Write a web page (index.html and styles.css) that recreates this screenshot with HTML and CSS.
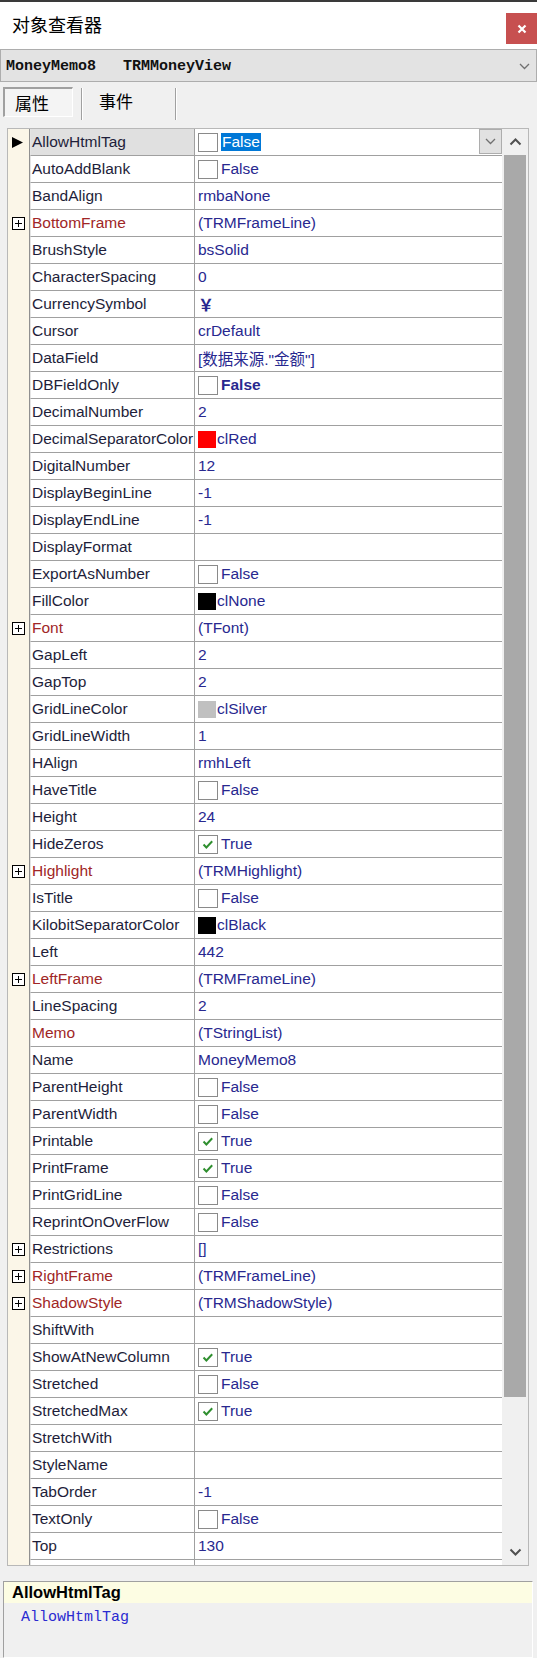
FILE: index.html
```html
<!DOCTYPE html>
<html lang="zh-CN">
<head>
<meta charset="utf-8">
<title>对象查看器</title>
<link rel="stylesheet" href="styles.css">
</head>
<body>
<svg class="defs" width="0" height="0">
  <symbol id="plus" viewBox="0 0 13 13"><rect x="0.5" y="0.5" width="12" height="12" fill="#fff" stroke="#000"/><path d="M3 6.5h7M6.5 3v7" stroke="#000" stroke-width="1"/></symbol>
  <symbol id="tick" viewBox="0 0 19 19"><path d="M4.5 9.5l3.2 3.4 6.5-7" fill="none" stroke="#2f8f2f" stroke-width="2.2"/></symbol>
</svg>
<div class="window">
  <header class="titlebar">
    <span class="title">对象查看器</span>
    <span class="close"><svg width="10" height="10" viewBox="0 0 10 10"><path d="M1.5 1.5l7 7M8.5 1.5l-7 7" stroke="#fff" stroke-width="2.2"/></svg></span>
  </header>
  <div class="combo">
    <span class="combo-text">MoneyMemo8   TRMMoneyView</span>
    <svg class="combo-chev" width="11" height="7" viewBox="0 0 11 7"><path d="M1 1l4.5 4.5L10 1" fill="none" stroke="#707070" stroke-width="1.3"/></svg>
  </div>
  <nav class="tabs">
    <span class="tab active">属性</span>
    <span class="sep"></span>
    <span class="tab">事件</span>
    <span class="sep"></span>
  </nav>
  <section class="inspector">
    <div class="rows">
      <div class="row selected"><div class="gut"><svg width="11" height="11" viewBox="0 0 11 11"><path d="M0 0L11 5.5L0 11Z" fill="#000"/></svg></div><div class="name">AllowHtmlTag</div><div class="val"><span class="cb"></span><span class="hl">False</span><span class="dd"><svg width="11" height="7" viewBox="0 0 11 7"><path d="M1 1l4.5 4.5L10 1" fill="none" stroke="#707070" stroke-width="1.3"/></svg></span></div></div>
      <div class="row"><div class="gut"></div><div class="name">AutoAddBlank</div><div class="val"><span class="cb"></span>False</div></div>
      <div class="row"><div class="gut"></div><div class="name">BandAlign</div><div class="val">rmbaNone</div></div>
      <div class="row"><div class="gut"><svg class="plus"><use href="#plus"/></svg></div><div class="name obj">BottomFrame</div><div class="val">(TRMFrameLine)</div></div>
      <div class="row"><div class="gut"></div><div class="name">BrushStyle</div><div class="val">bsSolid</div></div>
      <div class="row"><div class="gut"></div><div class="name">CharacterSpacing</div><div class="val">0</div></div>
      <div class="row"><div class="gut"></div><div class="name">CurrencySymbol</div><div class="val"><span class="yen">￥</span></div></div>
      <div class="row"><div class="gut"></div><div class="name">Cursor</div><div class="val">crDefault</div></div>
      <div class="row"><div class="gut"></div><div class="name">DataField</div><div class="val cjk">[数据来源."金额"]</div></div>
      <div class="row"><div class="gut"></div><div class="name">DBFieldOnly</div><div class="val"><span class="cb"></span><b class="bold">False</b></div></div>
      <div class="row"><div class="gut"></div><div class="name">DecimalNumber</div><div class="val">2</div></div>
      <div class="row"><div class="gut"></div><div class="name">DecimalSeparatorColor</div><div class="val"><span class="sw red"></span>clRed</div></div>
      <div class="row"><div class="gut"></div><div class="name">DigitalNumber</div><div class="val">12</div></div>
      <div class="row"><div class="gut"></div><div class="name">DisplayBeginLine</div><div class="val">-1</div></div>
      <div class="row"><div class="gut"></div><div class="name">DisplayEndLine</div><div class="val">-1</div></div>
      <div class="row"><div class="gut"></div><div class="name">DisplayFormat</div><div class="val"></div></div>
      <div class="row"><div class="gut"></div><div class="name">ExportAsNumber</div><div class="val"><span class="cb"></span>False</div></div>
      <div class="row"><div class="gut"></div><div class="name">FillColor</div><div class="val"><span class="sw black"></span>clNone</div></div>
      <div class="row"><div class="gut"><svg class="plus"><use href="#plus"/></svg></div><div class="name obj">Font</div><div class="val">(TFont)</div></div>
      <div class="row"><div class="gut"></div><div class="name">GapLeft</div><div class="val">2</div></div>
      <div class="row"><div class="gut"></div><div class="name">GapTop</div><div class="val">2</div></div>
      <div class="row"><div class="gut"></div><div class="name">GridLineColor</div><div class="val"><span class="sw silver"></span>clSilver</div></div>
      <div class="row"><div class="gut"></div><div class="name">GridLineWidth</div><div class="val">1</div></div>
      <div class="row"><div class="gut"></div><div class="name">HAlign</div><div class="val">rmhLeft</div></div>
      <div class="row"><div class="gut"></div><div class="name">HaveTitle</div><div class="val"><span class="cb"></span>False</div></div>
      <div class="row"><div class="gut"></div><div class="name">Height</div><div class="val">24</div></div>
      <div class="row"><div class="gut"></div><div class="name">HideZeros</div><div class="val"><span class="cb"><svg><use href="#tick"/></svg></span>True</div></div>
      <div class="row"><div class="gut"><svg class="plus"><use href="#plus"/></svg></div><div class="name obj">Highlight</div><div class="val">(TRMHighlight)</div></div>
      <div class="row"><div class="gut"></div><div class="name">IsTitle</div><div class="val"><span class="cb"></span>False</div></div>
      <div class="row"><div class="gut"></div><div class="name">KilobitSeparatorColor</div><div class="val"><span class="sw black"></span>clBlack</div></div>
      <div class="row"><div class="gut"></div><div class="name">Left</div><div class="val">442</div></div>
      <div class="row"><div class="gut"><svg class="plus"><use href="#plus"/></svg></div><div class="name obj">LeftFrame</div><div class="val">(TRMFrameLine)</div></div>
      <div class="row"><div class="gut"></div><div class="name">LineSpacing</div><div class="val">2</div></div>
      <div class="row"><div class="gut"></div><div class="name obj">Memo</div><div class="val">(TStringList)</div></div>
      <div class="row"><div class="gut"></div><div class="name">Name</div><div class="val">MoneyMemo8</div></div>
      <div class="row"><div class="gut"></div><div class="name">ParentHeight</div><div class="val"><span class="cb"></span>False</div></div>
      <div class="row"><div class="gut"></div><div class="name">ParentWidth</div><div class="val"><span class="cb"></span>False</div></div>
      <div class="row"><div class="gut"></div><div class="name">Printable</div><div class="val"><span class="cb"><svg><use href="#tick"/></svg></span>True</div></div>
      <div class="row"><div class="gut"></div><div class="name">PrintFrame</div><div class="val"><span class="cb"><svg><use href="#tick"/></svg></span>True</div></div>
      <div class="row"><div class="gut"></div><div class="name">PrintGridLine</div><div class="val"><span class="cb"></span>False</div></div>
      <div class="row"><div class="gut"></div><div class="name">ReprintOnOverFlow</div><div class="val"><span class="cb"></span>False</div></div>
      <div class="row"><div class="gut"><svg class="plus"><use href="#plus"/></svg></div><div class="name">Restrictions</div><div class="val">[]</div></div>
      <div class="row"><div class="gut"><svg class="plus"><use href="#plus"/></svg></div><div class="name obj">RightFrame</div><div class="val">(TRMFrameLine)</div></div>
      <div class="row"><div class="gut"><svg class="plus"><use href="#plus"/></svg></div><div class="name obj">ShadowStyle</div><div class="val">(TRMShadowStyle)</div></div>
      <div class="row"><div class="gut"></div><div class="name">ShiftWith</div><div class="val"></div></div>
      <div class="row"><div class="gut"></div><div class="name">ShowAtNewColumn</div><div class="val"><span class="cb"><svg><use href="#tick"/></svg></span>True</div></div>
      <div class="row"><div class="gut"></div><div class="name">Stretched</div><div class="val"><span class="cb"></span>False</div></div>
      <div class="row"><div class="gut"></div><div class="name">StretchedMax</div><div class="val"><span class="cb"><svg><use href="#tick"/></svg></span>True</div></div>
      <div class="row"><div class="gut"></div><div class="name">StretchWith</div><div class="val"></div></div>
      <div class="row"><div class="gut"></div><div class="name">StyleName</div><div class="val"></div></div>
      <div class="row"><div class="gut"></div><div class="name">TabOrder</div><div class="val">-1</div></div>
      <div class="row"><div class="gut"></div><div class="name">TextOnly</div><div class="val"><span class="cb"></span>False</div></div>
      <div class="row"><div class="gut"></div><div class="name">Top</div><div class="val">130</div></div>
      <div class="row"><div class="gut"></div><div class="name"></div><div class="val"></div></div>
    </div>
    <div class="scrollbar">
      <span class="arrow"><svg width="13" height="8" viewBox="0 0 13 8"><path d="M1.5 6.5L6.5 1.5L11.5 6.5" fill="none" stroke="#505050" stroke-width="2"/></svg></span>
      <span class="thumb"></span>
      <span class="track"></span>
      <span class="arrow"><svg width="13" height="8" viewBox="0 0 13 8"><path d="M1.5 1.5L6.5 6.5L11.5 1.5" fill="none" stroke="#505050" stroke-width="2"/></svg></span>
    </div>
  </section>
  <section class="desc">
    <div class="desc-head">AllowHtmlTag</div>
    <div class="desc-body">AllowHtmlTag</div>
  </section>
</div>
</body>
</html>
```

FILE: styles.css
```css
* { box-sizing: border-box; }
html, body { margin: 0; padding: 0; }
body {
  width: 537px;
  height: 1658px;
  background: #f0f0f0;
  font-family: "Liberation Sans", Arial, "Noto Sans CJK SC", sans-serif;
  font-size: 15.5px;
  overflow: hidden;
}
.defs { position: absolute; width: 0; height: 0; }
.window {
  border-top: 2px solid #3a3a3a;
  display: flex;
  flex-direction: column;
}
.titlebar {
  height: 47px;
  background: #fff;
  display: flex;
  justify-content: space-between;
  align-items: flex-start;
}
.title {
  font-family: "Noto Sans CJK SC", sans-serif;
  font-size: 18px;
  line-height: 24px;
  margin: 10px 0 0 12px;
  color: #000;
}
.close {
  width: 31px;
  height: 31px;
  margin-top: 11px;
  background: #c75050;
  display: flex;
  align-items: center;
  justify-content: center;
}
.combo {
  height: 33px;
  background: #e3e3e3;
  border: 1px solid #adadad;
  display: flex;
  align-items: center;
  justify-content: space-between;
  padding: 2px 6px 0 5px;
}
.combo-text {
  font-family: "Liberation Mono", "Courier New", monospace;
  font-size: 15px;
  font-weight: bold;
  white-space: pre;
  color: #111;
}
.tabs {
  height: 46px;
  display: flex;
  align-items: flex-start;
  padding: 5px 0 0 3px;
}
.tab {
  font-family: "Noto Sans CJK SC", sans-serif;
  font-size: 17px;
  line-height: 28px;
  color: #000;
  height: 30px;
}
.tab.active {
  width: 70px;
  padding-left: 10px;
  border-top: 2px solid #a0a0a0;
  border-left: 2px solid #a0a0a0;
  border-right: 1px solid #fff;
  border-bottom: 1px solid #fff;
  background: #f4f4f4;
}
.tab + .sep { margin-left: 8px; }
.sep {
  width: 2px;
  height: 32px;
  margin-top: 1px;
  border-left: 1px solid #a0a0a0;
  border-right: 1px solid #fff;
}
.sep + .tab { margin-left: 16px; margin-right: 34px; }
.inspector {
  margin-left: 7px;
  width: 522px;
  height: 1438px;
  border: 1px solid #b8b8b8;
  display: flex;
  background: #fff;
}
.rows {
  width: 494px;
  height: 1436px;
  overflow: hidden;
  display: flex;
  flex-direction: column;
}
.row {
  display: grid;
  grid-template-columns: 22px 165px 307px;
  height: 27px;
  flex: 0 0 27px;
}
.gut {
  background: #fbf6e8;
  border-right: 1px solid #909090;
  display: flex;
  align-items: center;
  padding-left: 4px;
}
.plus { width: 13px; height: 13px; }
.name {
  border-right: 1px solid #a0a0a0;
  border-bottom: 1px solid #a0a0a0;
  border-left: 1px solid #e4e4e4;
  padding-left: 1px;
  line-height: 26px;
  color: #1e1e3a;
  white-space: nowrap;
  overflow: hidden;
}
.name.obj { color: #a02626; }
.row.selected .name { background: #e0e0e0; }
.val {
  border-bottom: 1px solid #a0a0a0;
  padding-left: 3px;
  display: flex;
  align-items: center;
  color: #28288f;
  white-space: nowrap;
  overflow: hidden;
}
.val.cjk { font-size: 15.5px; }
.cb {
  width: 20px;
  height: 19px;
  border: 1px solid #8a8a8a;
  background: #fff;
  margin-right: 3px;
  flex: 0 0 auto;
  display: flex;
}
.cb svg { width: 18px; height: 17px; }
.hl {
  background: #0078d7;
  color: #fff;
  padding: 0 1px;
  line-height: 18px;
}
.dd {
  margin-left: auto;
  align-self: flex-start;
  width: 23px;
  height: 25px;
  background: #e1e1e1;
  border: 1px solid #adadad;
  display: flex;
  align-items: center;
  justify-content: center;
}
.bold { font-weight: bold; }
.yen {
  font-family: "Noto Sans CJK SC", sans-serif;
  font-weight: bold;
  font-size: 16px;
}
.sw {
  width: 18px;
  height: 17px;
  margin-right: 1px;
  flex: 0 0 auto;
}
.sw.red { background: #ff0000; }
.sw.black { background: #000; }
.sw.silver { background: #c0c0c0; }
.scrollbar {
  width: 26px;
  background: #f0f0f0;
  display: flex;
  flex-direction: column;
  align-items: center;
}
.arrow {
  height: 26px;
  flex: 0 0 26px;
  display: flex;
  align-items: center;
  justify-content: center;
}
.thumb {
  width: 22px;
  height: 1242px;
  flex: 0 0 1242px;
  background: #a9a9a9;
}
.track { flex: 1; }
.desc {
  margin: 15px 0 0 3px;
  width: 530px;
  height: 77px;
  border-top: 1px solid #a0a0a0;
  border-left: 1px solid #a0a0a0;
  border-right: 1px solid #fff;
  border-bottom: 1px solid #fff;
  background: #f0f0f0;
}
.desc-head {
  height: 21px;
  background: #fdfde3;
  font-weight: bold;
  font-size: 16.5px;
  line-height: 21px;
  padding-left: 8px;
  color: #000;
}
.desc-body {
  font-family: "Liberation Mono", "Courier New", monospace;
  font-size: 15px;
  line-height: 22px;
  margin-top: 4px;
  padding-left: 17px;
  color: #2a2ad0;
}
```
